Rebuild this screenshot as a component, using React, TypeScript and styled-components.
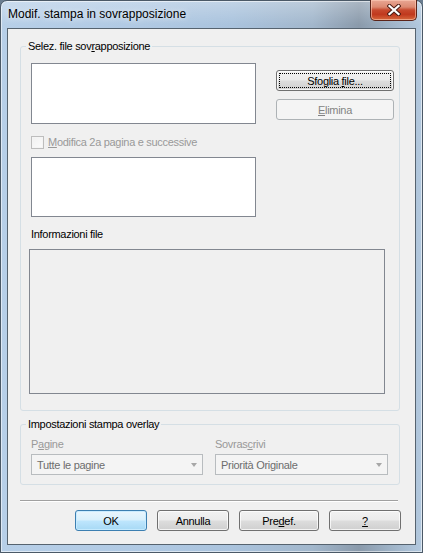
import React from 'react';
import styled, { createGlobalStyle } from 'styled-components';

const Global = createGlobalStyle`
  html, body { margin: 0; padding: 0; width: 423px; height: 553px; overflow: hidden; background: #6a7d90; }
  #root { width: 423px; height: 553px; }
  * { box-sizing: border-box; }
`;

const FONT = `"Liberation Sans", Arial, sans-serif`;

const Window = styled.div`
  width: 423px;
  height: 553px;
  display: flex;
  flex-direction: column;
  border: 1px solid #4b5967;
  border-radius: 7px 7px 0 0;
  padding: 0 6px 7px 6px;
  background:
    linear-gradient(180deg, rgba(255,255,255,0.28) 0px, rgba(255,255,255,0) 24px),
    linear-gradient(90deg, #b7cfe8 0%, #b1cae4 30%, #aac3dd 55%, #a2b7cc 74%, #8a9aab 85%, #9db1c5 92%, #b3c9df 100%);
  box-shadow: inset 0 0 0 1px rgba(255,255,255,0.55);
  font-family: ${FONT};
`;

const TitleBar = styled.div`
  height: 27px;
  display: flex;
  justify-content: space-between;
  align-items: flex-start;
  padding-left: 1px;
  margin-right: -1px;
`;

const Title = styled.div`
  margin-top: 6px;
  font-size: 12px;
  line-height: 15px;
  color: #000;
  text-shadow: 0 0 6px rgba(255,255,255,0.9);
`;

const CloseButton = styled.div`
  width: 47px;
  height: 21px;
  margin-top: -1px;
  display: flex;
  align-items: center;
  justify-content: center;
  border: 1px solid #5b2419;
  border-top: none;
  border-radius: 0 0 5px 5px;
  background: linear-gradient(180deg, #e9a794 0%, #dc8a72 35%, #c7492e 50%, #c0391e 72%, #d7683d 100%);
  box-shadow: inset 0 0 0 1px rgba(255, 210, 190, 0.55);
`;

const Client = styled.div`
  flex: 1;
  display: flex;
  flex-direction: column;
  background: #f0f0f0;
  border: 1px solid #56636f;
  padding-left: 12px;
`;

const Group = styled.fieldset<{ $top: number }>`
  margin: ${p => p.$top}px 0 0 0;
  padding: 0;
  width: 380px;
  min-width: 0;
  border: 1px solid #d5dfe5;
  border-radius: 3px;
`;

const Legend = styled.legend`
  padding: 0 2px;
  margin-left: 5px;
  font-size: 11px;
  line-height: 13px;
  letter-spacing: -0.3px;
  color: #000;
`;

const GroupBody = styled.div<{ $pad: string }>`
  display: flex;
  flex-direction: column;
  padding: ${p => p.$pad};
`;

const Row = styled.div`
  display: flex;
  align-items: flex-start;
`;

const ListBox = styled.div<{ $h: number; $top?: number }>`
  width: 225px;
  height: ${p => p.$h}px;
  margin-top: ${p => p.$top ?? 0}px;
  background: #fff;
  border: 1px solid #828790;
`;

const ButtonCol = styled.div`
  display: flex;
  flex-direction: column;
  gap: 8px;
  margin: 7px 0 0 20px;
`;

const Btn = styled.button<{ $w: number; $default?: boolean; $focus?: boolean }>`
  position: relative;
  width: ${p => p.$w}px;
  height: 21px;
  padding: 0;
  font-family: ${FONT};
  font-size: 11px;
  letter-spacing: -0.3px;
  color: #000;
  border: 1px solid ${p => (p.$default ? '#3c7fb1' : '#707070')};
  border-radius: 3px;
  background: ${p =>
    p.$default
      ? 'linear-gradient(180deg, #eaf6fd 0%, #d9f0fc 48%, #bee6fd 52%, #a7d9f5 100%)'
      : 'linear-gradient(180deg, #f2f2f2 0%, #ebebeb 48%, #dddddd 52%, #cfcfcf 100%)'};
  box-shadow: inset 0 0 0 1px ${p => (p.$default ? 'rgba(200,235,255,0.9)' : 'rgba(255,255,255,0.75)')};
  &:disabled {
    border-color: #adb2b5;
    background: #f4f4f4;
    color: #838383;
    box-shadow: none;
  }
  ${p =>
    p.$focus &&
    `&::after {
      content: '';
      position: absolute;
      inset: 2px;
      border: 1px dotted #000;
      border-radius: 1px;
    }`}
`;

const U = styled.span`
  text-decoration: underline;
  text-underline-offset: 1px;
`;

const CheckRow = styled.div`
  display: flex;
  align-items: center;
  gap: 4px;
  height: 13px;
  margin-top: 12px;
`;

const CheckBox = styled.div`
  width: 13px;
  height: 13px;
  border: 1px solid #bdbdbd;
  background: linear-gradient(135deg, #f0f0f0 0%, #fbfbfb 100%);
  box-shadow: inset 0 0 0 1px #f4f4f4;
`;

const Label = styled.div<{ $disabled?: boolean; $top?: number }>`
  font-size: 11px;
  line-height: 13px;
  letter-spacing: -0.3px;
  color: ${p => (p.$disabled ? '#999999' : '#000')};
  margin-top: ${p => p.$top ?? 0}px;
`;

const InfoBox = styled.div`
  width: 356px;
  height: 145px;
  margin: 8px 0 0 -2px;
  background: #f0f0f0;
  border: 1px solid #828790;
`;

const ComboRow = styled.div`
  display: flex;
  gap: 12px;
`;

const ComboCol = styled.div<{ $w: number }>`
  width: ${p => p.$w}px;
  display: flex;
  flex-direction: column;
`;

const Combo = styled.div`
  height: 21px;
  margin-top: 3px;
  display: flex;
  align-items: center;
  justify-content: space-between;
  padding: 0 5px 0 5px;
  border: 1px solid #b8bcbf;
  background: #f4f4f4;
  font-size: 11px;
  letter-spacing: -0.3px;
  color: #6d6d6d;
`;

const Arrow = styled.span`
  width: 0;
  height: 0;
  border-left: 3.5px solid transparent;
  border-right: 3.5px solid transparent;
  border-top: 4px solid #a7a7a7;
`;

const Separator = styled.div`
  width: 378px;
  height: 2px;
  margin-top: 15px;
  border-top: 1px solid #a0a0a0;
  border-bottom: 1px solid #ffffff;
`;

const ButtonRow = styled.div`
  display: flex;
  margin-top: 8px;
  padding-left: 55px;
  gap: 10px;
`;

export default function App() {
  return (
    <>
      <Global />
      <Window>
        <TitleBar>
          <Title>Modif. stampa in sovrapposizione</Title>
          <CloseButton>
            <svg width="14" height="12" viewBox="0 0 14 12">
              <path d="M2.5 2 L11.5 10 M11.5 2 L2.5 10" stroke="#4a1b12" strokeWidth="4.2" strokeLinecap="square" fill="none" />
              <path d="M2.5 2 L11.5 10 M11.5 2 L2.5 10" stroke="#ffffff" strokeWidth="2.3" strokeLinecap="square" fill="none" />
            </svg>
          </CloseButton>
        </TitleBar>
        <Client>
          <Group $top={11}>
            <Legend>
              Selez. file sov<U>r</U>apposizione
            </Legend>
            <GroupBody $pad="10px 0 16px 10px">
              <Row>
                <ListBox $h={61} />
                <ButtonCol>
                  <Btn $w={118} $focus>
                    Sfoglia <U>f</U>ile...
                  </Btn>
                  <Btn $w={118} disabled>
                    <U>E</U>limina
                  </Btn>
                </ButtonCol>
              </Row>
              <CheckRow>
                <CheckBox />
                <Label $disabled>
                  <U>M</U>odifica 2a pagina e successive
                </Label>
              </CheckRow>
              <ListBox $h={60} $top={8} />
              <Label $top={11}>Informazioni file</Label>
              <InfoBox />
            </GroupBody>
          </Group>
          <Group $top={7}>
            <Legend>Impostazioni stampa overlay</Legend>
            <GroupBody $pad="7px 0 9px 10px">
              <ComboRow>
                <ComboCol $w={172}>
                  <Label $disabled>
                    P<U>a</U>gine
                  </Label>
                  <Combo>
                    <span>Tutte le pagine</span>
                    <Arrow />
                  </Combo>
                </ComboCol>
                <ComboCol $w={173}>
                  <Label $disabled>
                    Sovras<U>c</U>rivi
                  </Label>
                  <Combo>
                    <span>Priorità Originale</span>
                    <Arrow />
                  </Combo>
                </ComboCol>
              </ComboRow>
            </GroupBody>
          </Group>
          <Separator />
          <ButtonRow>
            <Btn $w={72} $default>OK</Btn>
            <Btn $w={72}>Annulla</Btn>
            <Btn $w={80}>
              Pre<U>d</U>ef.
            </Btn>
            <Btn $w={72}>
              <U>?</U>
            </Btn>
          </ButtonRow>
        </Client>
      </Window>
    </>
  );
}
